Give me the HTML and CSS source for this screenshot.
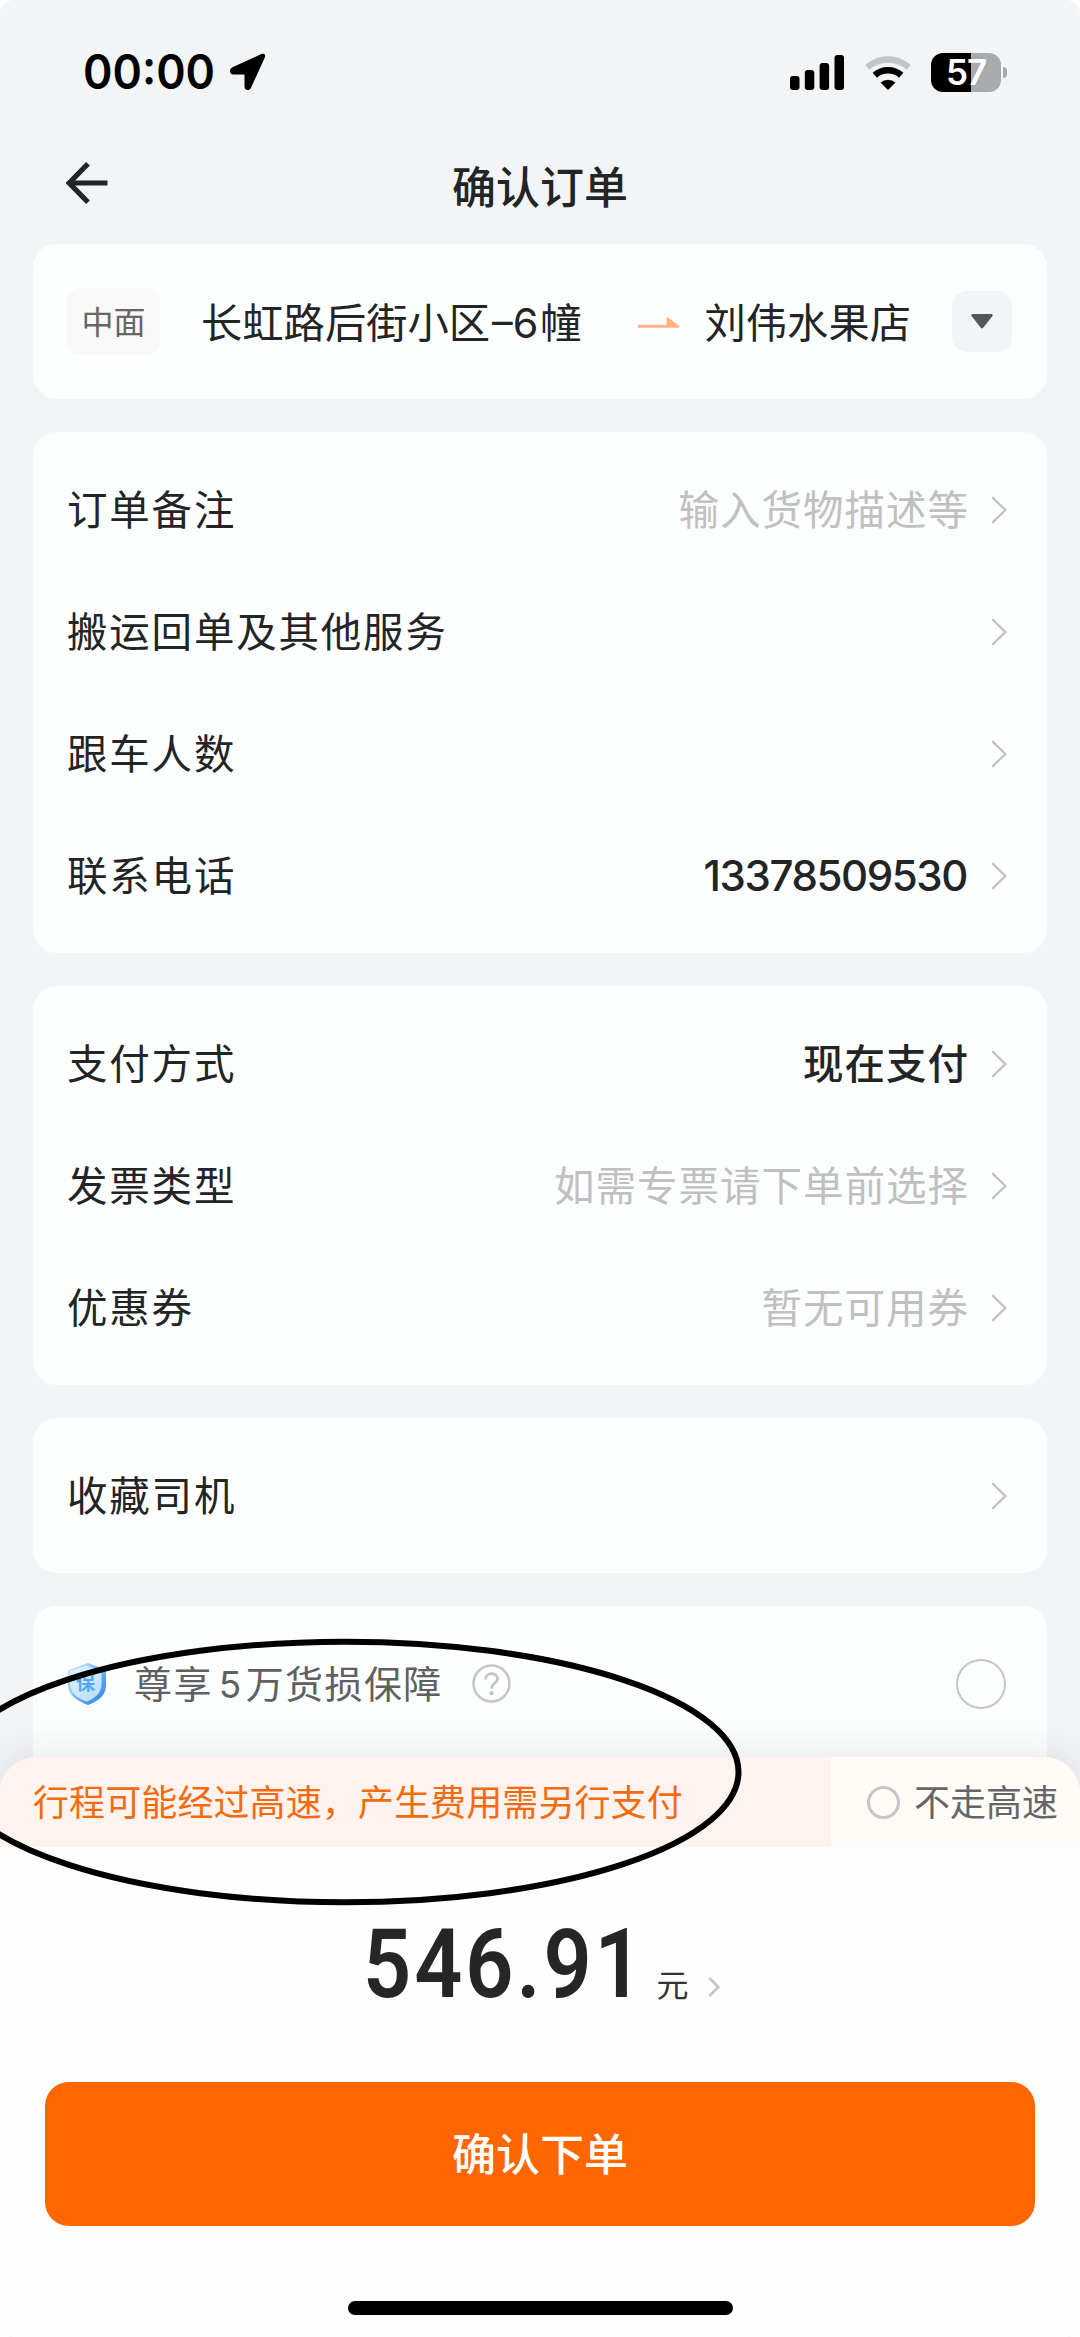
FILE: index.html
```html
<!DOCTYPE html>
<html lang="zh-CN">
<head>
<meta charset="utf-8">
<title>确认订单</title>
<link rel="stylesheet" href="styles.css">
</head>
<body>
<svg class="defs" aria-hidden="true">
  <symbol id="chevron" viewBox="0 0 16 28"><path d="M1.2 1.2 14.4 14 1.2 26.8" fill="none" stroke="#c2c2c2" stroke-width="2.4"/></symbol>
</svg>
<div class="screen">
  <header class="status">
    <span class="time">00:00</span>
    <svg class="locate" viewBox="0 0 37 38"><path d="M32.500 1 3.500 14.200C-.4 16 .3 21.500 4.500 21.500H15.500V33.500C15.500 37.700 20.500 38.200 22 34.700L35.600 5C37 2 35.500 -.3 32.500 1Z"/></svg>
    <svg class="signal" viewBox="0 0 54 35"><rect y="21" width="9.500" height="14" rx="3"/><rect x="14.800" y="15" width="9.500" height="20" rx="3"/><rect x="29.600" y="8" width="9.500" height="27" rx="3"/><rect x="44.500" y="0" width="9.500" height="35" rx="3"/></svg>
    <svg class="wifi" viewBox="0 0 46 35"><g fill="none" stroke-width="6.500"><path d="M2.300 12.300A31 31 0 0 1 43.700 12.300" stroke="#c4c5c7"/><path d="M9.800 20.300A20 20 0 0 1 36.200 20.300" stroke="#000"/></g><path d="M15.500 27.500A11.500 11.500 0 0 1 30.500 27.500L23 35Z"/></svg>
    <span class="battery"><span class="level">57</span></span><span class="nub"></span>
  </header>
  <nav class="nav">
    <svg class="back" viewBox="0 0 42 42"><path d="M22 1.800 3.200 21 22 40.200M3.500 21H41.500" fill="none" stroke="#232425" stroke-width="5.200"/></svg>
    <h1>确认订单</h1>
  </nav>

  <main class="cards">
    <section class="card">
      <div class="row route">
        <span class="tag">中面</span>
        <span class="from">长虹路后街小区<span class="num">–6</span>幢</span>
        <svg class="to-arrow" viewBox="0 0 42 12"><path d="M0 7.800H28.500V.8Q29 0 30 .6L41.300 9Q42 10.800 40 10.800H0Z" fill="#ffb183"/></svg>
        <span class="dest">刘伟水果店</span>
        <span class="expand"><svg viewBox="0 0 22 15"><path d="M1.500 0H20.500Q22.500 .5 21.300 2.200L12.200 13.800Q11 15 9.800 13.800L.7 2.200Q-.5 .5 1.500 0Z" fill="#555657"/></svg></span>
      </div>
    </section>

    <section class="card">
      <div class="row"><span class="label">订单备注</span><span class="hint">输入货物描述等</span><svg class="chev"><use href="#chevron"/></svg></div>
      <div class="row"><span class="label">搬运回单及其他服务</span><svg class="chev"><use href="#chevron"/></svg></div>
      <div class="row"><span class="label">跟车人数</span><svg class="chev"><use href="#chevron"/></svg></div>
      <div class="row"><span class="label">联系电话</span><span class="phone">13378509530</span><svg class="chev"><use href="#chevron"/></svg></div>
    </section>

    <section class="card">
      <div class="row"><span class="label">支付方式</span><span class="value">现在支付</span><svg class="chev"><use href="#chevron"/></svg></div>
      <div class="row"><span class="label">发票类型</span><span class="hint">如需专票请下单前选择</span><svg class="chev"><use href="#chevron"/></svg></div>
      <div class="row"><span class="label">优惠券</span><span class="hint">暂无可用券</span><svg class="chev"><use href="#chevron"/></svg></div>
    </section>

    <section class="card">
      <div class="row"><span class="label">收藏司机</span><svg class="chev"><use href="#chevron"/></svg></div>
    </section>

    <section class="card last">
      <div class="row insure">
        <svg class="shield" viewBox="0 0 38 42">
          <defs>
            <linearGradient id="rim" x1="0" y1="0" x2="1" y2="1"><stop offset="0" stop-color="#d5ebfb"/><stop offset=".45" stop-color="#7dbcf3"/><stop offset="1" stop-color="#1f7ee6"/></linearGradient>
            <linearGradient id="face" x1="0" y1="0" x2="1" y2="1"><stop offset="0" stop-color="#e6f4fd"/><stop offset="1" stop-color="#b4dcf9"/></linearGradient>
          </defs>
          <path d="M20 0 36 6Q38 7 38 9.500V22C38 32 31 38 20 42 9 38 0 32 0 21V9Q0 7 2 6.400Z" fill="url(#rim)"/>
          <path d="M18 2.500 32 8Q33.500 8.600 33.500 10.500V21C33.500 30 27 35.500 18.500 38.500 9 35 2 30 2 20.500V10Q2 8 3.500 7.600Z" fill="url(#face)"/>
          <text x="8" y="27" class="shield-text">保</text>
        </svg>
        <span class="cover">尊享<span class="five">5</span>万货损保障</span>
        <svg class="help" viewBox="0 0 39 39"><circle cx="19.500" cy="19.500" r="18" fill="none" stroke="#c6c6c6" stroke-width="2.600"/><path d="M13.500 15.500C13.500 7.800 25.500 7.800 25.500 15C25.500 19.500 19.500 19 19.500 24.500" fill="none" stroke="#c6c6c6" stroke-width="2.800"/><circle cx="19.500" cy="29.200" r="2.100" fill="#c6c6c6"/></svg>
        <span class="radio big"></span>
      </div>
    </section>
  </main>

  <footer class="sheet">
    <div class="banner">
      <span class="notice">行程可能经过高速，产生费用需另行支付</span>
      <span class="avoid"><span class="radio small"></span>不走高速</span>
    </div>
    <div class="price"><span class="amount">546.91</span><span class="unit">元</span><svg class="more" viewBox="0 0 12 20"><path d="M1.300 1 10.300 10 1.300 19" fill="none" stroke="#c6c6c6" stroke-width="2.800"/></svg></div>
    <button class="submit">确认下单</button>
    <div class="home"></div>
  </footer>

  <svg class="mark" viewBox="0 0 1080 280"><ellipse cx="345" cy="140" rx="393.500" ry="130.300" fill="none" stroke="#000" stroke-width="6"/></svg>
</div>
</body>
</html>
```

FILE: styles.css
```css
* { box-sizing: border-box; }

body {
  margin: 0;
  background: #fff;
  font-family: "Noto Sans CJK SC", sans-serif;
  color: #232425;
}

.defs { display: none; }

.screen {
  position: relative;
  display: flex;
  flex-direction: column;
  width: 1080px;
  height: 2337px;
  overflow: hidden;
  border-radius: 14px;
  background: #f3f4f6;
}

.status {
  display: flex;
  align-items: center;
  height: 144px;
  padding: 0 73px 0 83px;
  flex: none;
}

.time {
  width: 146px;
  font: 600 48px/48px Inter, sans-serif;
  color: #000;
  white-space: nowrap;
  transform: scaleX(0.93);
  transform-origin: left;
}

.locate { width: 37px; height: 38px; }
.signal { width: 54px; height: 35px; margin-left: auto; }
.wifi { width: 46px; height: 35px; margin: 0 20px 0 21px; }

.battery {
  display: flex;
  align-items: center;
  justify-content: center;
  width: 70px;
  height: 39px;
  border-radius: 12px;
  background: linear-gradient(90deg, #000 40px, #a9aaac 40px);
}

.level {
  font: 600 35px/39px Inter, sans-serif;
  letter-spacing: -1px;
  color: #fff;
}

.nub {
  width: 4px;
  height: 11px;
  margin-left: 2px;
  border-radius: 0 4px 4px 0;
  background: #a9aaac;
}

.nav {
  display: grid;
  grid-template-columns: 42px 1fr 42px;
  align-items: center;
  height: 78px;
  padding: 0 66px;
  flex: none;
}

.back { width: 42px; height: 42px; }

h1 {
  margin: 3px 0 0;
  font-size: 44px;
  line-height: 66px;
  font-weight: 500;
  text-align: center;
}

.cards {
  display: flex;
  flex-direction: column;
  gap: 33px;
  height: 1568px;
  padding: 22px 33px 0;
  overflow: hidden;
  flex: none;
}

.card {
  padding: 16.5px 34px;
  border-radius: 24px;
  background: #fdfefe;
  flex: none;
}

.last { height: 200px; }

.row {
  display: flex;
  align-items: center;
  height: 122px;
  line-height: 60px;
  white-space: nowrap;
}

.label {
  margin-right: auto;
  padding-bottom: 4px;
  font-size: 40.500px;
  letter-spacing: 1.800px;
}

.hint, .value {
  margin-right: 22px;
  padding-bottom: 4px;
  font-size: 40.500px;
  letter-spacing: 1px;
  color: #c0c0c0;
}

.value { color: #232425; font-weight: 500; }

.phone {
  margin-right: 24px;
  font-family: Inter, sans-serif;
  font-size: 42px;
  font-weight: 500;
  letter-spacing: -1.400px;
}

.chev { width: 16px; height: 28px; margin-right: 6px; }

.tag {
  width: 93px;
  height: 67px;
  margin-right: 41px;
  border-radius: 13px;
  background: #f9f9fa;
  font-size: 32px;
  line-height: 65px;
  text-align: center;
  color: #666;
}

.from, .dest { font-size: 41.300px; }
.from { padding-bottom: 1px; }
.dest { padding-bottom: 4px; }
.num { margin: 0 2px; font-family: Inter, sans-serif; }
.to-arrow { width: 42px; height: 12px; margin: 2px 25px 0 auto; }

.expand {
  display: grid;
  place-items: center;
  width: 60px;
  height: 61px;
  margin: 0 1px 0 41px;
  border-radius: 15px;
  background: #f2f5f8;
}

.expand svg { width: 22px; height: 15px; }

.shield { width: 38px; height: 42px; margin-left: 1px; }

.shield-text {
  font-size: 19px;
  font-weight: 700;
  fill: #55a8ee;
}

.cover {
  margin-left: 28px;
  font-size: 38px;
  letter-spacing: 1.400px;
  color: #606060;
}

.five { margin: 0 3px 0 6px; font-family: Inter, sans-serif; font-size: 37px; }
.help { width: 39px; height: 39px; margin-left: 29px; }

.radio {
  display: block;
  border: 2.500px solid #c6c6c6;
  border-radius: 50%;
}

.big { width: 50px; height: 50px; margin: 0 7px 0 auto; }
.small { width: 33px; height: 33px; margin: 3px 14px 0 0; border-width: 3px; }

.sheet {
  position: relative;
  display: flex;
  flex-direction: column;
  align-items: center;
  height: 580px;
  margin-top: -33px;
  border-radius: 36px 36px 0 0;
  background: #fefefe;
  box-shadow: 0 -6px 36px rgba(40, 50, 70, 0.1);
  flex: none;
}

.banner {
  display: flex;
  width: 1080px;
  height: 90px;
  overflow: hidden;
  border-radius: 36px 36px 0 0;
  font-size: 36px;
  line-height: 87px;
  white-space: nowrap;
}

.notice {
  width: 831px;
  padding-left: 33px;
  background: #fff3ef;
  letter-spacing: 0.100px;
  color: #f36b10;
}

.avoid {
  display: flex;
  align-items: center;
  width: 249px;
  padding: 0 0 3px 36px;
  background: #fffcf8;
  color: #666;
}

.price {
  display: flex;
  align-items: baseline;
  height: 152px;
  margin-top: 46px;
  padding-left: 3px;
}

/* Condensed numerals for the total */
.amount {
  width: 276px;
  font: 600 97px/142px Roboto, sans-serif;
  letter-spacing: 3.400px;
  color: #262626;
  transform: scaleX(0.87);
  transform-origin: left;
}

.unit { margin-left: 17px; font-size: 32px; color: #333; }
.more { width: 12px; height: 20px; margin: 0 0 3px 19px; }

.submit {
  width: 990px;
  height: 144px;
  margin-top: 37px;
  padding: 0 0 3px;
  border: 0;
  border-radius: 24px;
  background: #ff6600;
  font: 500 44px/141px "Noto Sans CJK SC", sans-serif;
  color: #fff;
}

.home {
  width: 385px;
  height: 14px;
  margin-top: 75px;
  border-radius: 7px;
  background: #000;
}

/* Hand-drawn highlight over the page */
.mark {
  position: absolute;
  top: 1632px;
  left: 0;
  width: 1080px;
  height: 280px;
  pointer-events: none;
}
```
